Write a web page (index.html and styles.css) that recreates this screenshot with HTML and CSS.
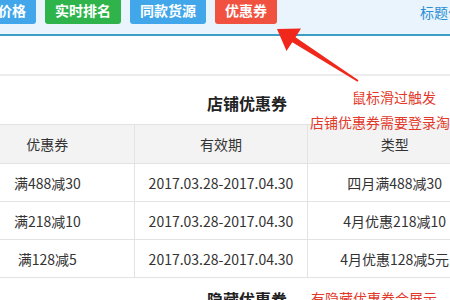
FILE: index.html
```html
<!DOCTYPE html>
<html lang="zh-CN">
<head>
    <meta charset="UTF-8">
    <title>优惠券</title>
    <link rel="stylesheet" href="styles.css">
</head>
<body>

    <!-- Top tabs -->
    <div class="topbar">
        <div class="tabs">
            <a class="tab tab-blue" href="#">价格</a>
            <a class="tab tab-green" href="#">实时排名</a>
            <a class="tab tab-blue" href="#">同款货源</a>
            <a class="tab tab-red" href="#">优惠券</a>
        </div>
        <a class="title-link" href="#">标题优化</a>
    </div>
    <div class="subbar"></div>

    <!-- Coupon section -->
    <div class="coupon">
        <div class="coupon-title">店铺优惠券</div>
        <table class="coupon-table">
            <tr>
                <th>优惠券</th>
                <th>有效期</th>
                <th>类型</th>
            </tr>
            <tr>
                <td>满488减30</td>
                <td>2017.03.28-2017.04.30</td>
                <td>四月满488减30</td>
            </tr>
            <tr>
                <td>满218减10</td>
                <td>2017.03.28-2017.04.30</td>
                <td>4月优惠218减10</td>
            </tr>
            <tr>
                <td>满128减5</td>
                <td>2017.03.28-2017.04.30</td>
                <td>4月优惠128减5元</td>
            </tr>
        </table>
        <div class="coupon-title hidden-title">隐藏优惠券</div>
    </div>

    <!-- Annotations -->
    <svg class="arrow" width="450" height="300" viewBox="0 0 450 300">
        <polygon points="277,29 301,28.5 295.5,37.3 358.5,80.2 357.5,81.8 292.3,42.3 286.5,51" fill="#f0281c"/>
    </svg>
    <div class="note note-hover">鼠标滑过触发</div>
    <div class="note note-login">店铺优惠券需要登录淘宝</div>
    <div class="note note-hidden">有隐藏优惠券会展示</div>

</body>
</html>
```

FILE: styles.css
```css
body {
    font-family: "Noto Sans CJK SC", sans-serif;
    margin: 0;
    padding: 0;
    width: 450px;
    height: 300px;
    overflow: hidden;
    position: relative;
    background: white;
    color: #333;
}
/* Top tabs */
.topbar {
    display: flex;
    align-items: flex-start;
    height: 34px;
    background: #eaf4fc;
    border-bottom: 2px solid #3c9fc4;
    white-space: nowrap;
}
.tabs {
    display: flex;
    gap: 9px;
    margin-left: -12px;
}
.tab {
    display: block;
    height: 27px;
    margin-top: -3px;
    padding: 0 10px;
    line-height: 27px;
    font-size: 14px;
    font-weight: bold;
    color: white;
    text-decoration: none;
    border-radius: 3px;
}
.tab-blue {
    background: #41a7ea;
}
.tab-green {
    background: #2fb44b;
}
.tab-red {
    background: #f1513f;
}
.title-link {
    margin-left: 143px;
    line-height: 24px;
    font-size: 14px;
    color: #2b8fd6;
    text-decoration: none;
}
.subbar {
    height: 38px;
    border-bottom: 2px solid #ececec;
}
/* Coupon section */
.coupon {
    margin-left: -40px;
    width: 574px;
}
.coupon-title {
    text-align: center;
    font-size: 16px;
    font-weight: bold;
    line-height: 24px;
    padding-top: 15px;
    margin-bottom: 9px;
    color: #222;
}
.hidden-title {
    padding-top: 0;
    margin-top: 9px;
}
.coupon-table {
    width: 522px;
    border-collapse: collapse;
    table-layout: fixed;
    font-size: 14px;
}
.coupon-table th,
.coupon-table td {
    border: 1px solid #e3e3e3;
    text-align: center;
    padding: 0;
    color: #333;
}
.coupon-table th {
    height: 38px;
    background: #f3f3f3;
    font-weight: normal;
}
.coupon-table td {
    height: 37px;
}
/* Annotations */
.arrow {
    position: absolute;
    top: 0;
    left: 0;
}
.note {
    position: absolute;
    font-size: 14px;
    line-height: 18px;
    color: #e3392b;
    white-space: nowrap;
}
.note-hover {
    left: 352px;
    top: 88px;
}
.note-login {
    left: 310px;
    top: 113px;
}
.note-hidden {
    left: 311px;
    top: 289px;
}
```
